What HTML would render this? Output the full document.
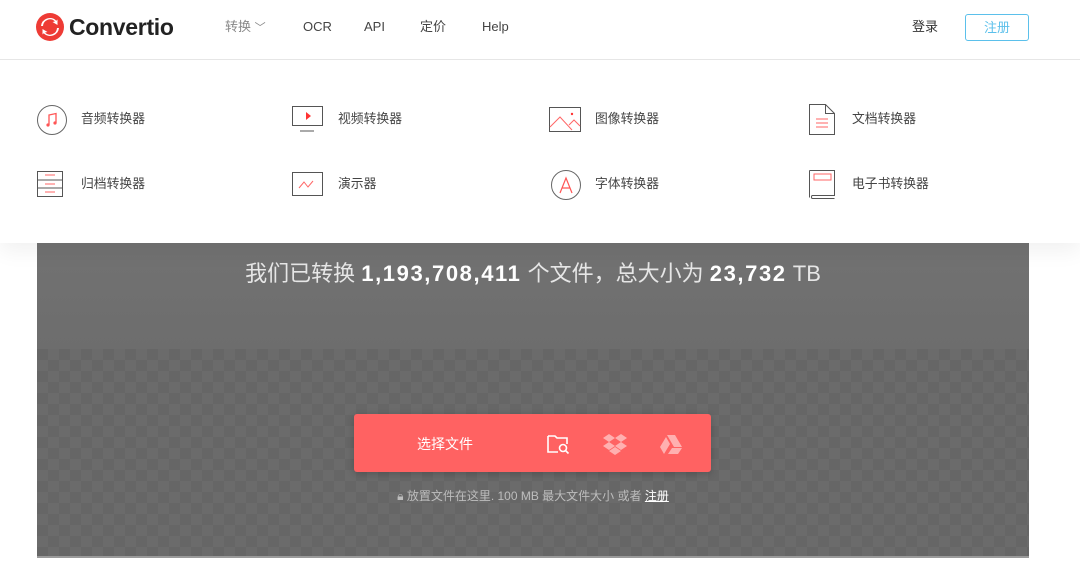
<!DOCTYPE html>
<html><head><meta charset="utf-8"><style>
*{margin:0;padding:0;box-sizing:border-box}
body{width:1080px;height:574px;background:#fff;font-family:"Liberation Sans","Noto Sans CJK SC",sans-serif;position:relative;overflow:hidden;color:#333}
.hdr{position:absolute;left:0;top:0;width:1080px;height:60px;border-bottom:1px solid #e6e6e6;background:#fff;z-index:3}
.nav{position:absolute;top:17px;height:20px;line-height:20px;font-size:13px;color:#444}
.menu{position:absolute;left:0;top:60px;width:1080px;height:183px;background:#fff;z-index:2;box-shadow:0 8px 20px rgba(0,0,0,.06)}
.it{position:absolute;font-size:12.8px;line-height:16px;color:#444}
.ic{position:absolute}
.panel{position:absolute;left:37px;top:243px;width:992px;height:315px;background:#666;border-bottom:2px solid #9a9a9a}
.top{position:absolute;left:0;top:0;width:992px;height:106px;background:linear-gradient(#727272,#6d6d6d)}
.chk{position:absolute;left:0;top:106px;width:992px;height:207px;background-color:#666;background-image:linear-gradient(45deg,#6b6b6b 25%,transparent 25%,transparent 75%,#6b6b6b 75%),linear-gradient(45deg,#6b6b6b 25%,transparent 25%,transparent 75%,#6b6b6b 75%);background-size:22px 22px;background-position:0 0,11px 11px}
.stat{position:absolute;left:0;top:16px;width:992px;line-height:30px;text-align:center;color:#e6e6e6;font-size:22px}
.stat b{color:#fff;font-weight:bold;letter-spacing:1.6px}
.btn{position:absolute;left:317px;top:171px;width:357px;height:58px;background:#ff6262;border-radius:3px;box-shadow:0 2px 8px rgba(0,0,0,.2)}
.note{position:absolute;left:0;top:244px;width:992px;text-align:center;color:#bdbdbd;font-size:12px}
</style></head><body>
<div class="hdr">
<svg style="position:absolute;left:36px;top:13px" width="28" height="28" viewBox="0 0 28 28"><circle cx="14" cy="14" r="14" fill="#ee3b35"/><path d="M7 13a7 7 0 0 1 12-4.5l-2.5 0.5 5 3 0-5.5-1.2 1.2A9 9 0 0 0 5 13z M21 15a7 7 0 0 1-12 4.5l2.5-.5-5-3 0 5.5 1.2-1.2A9 9 0 0 0 23 15z" fill="#fff"/></svg>
<div style="position:absolute;left:69px;top:12px;line-height:30px;font-size:23px;font-weight:bold;color:#222;letter-spacing:-0.3px">Convertio</div>
<div class="nav" style="left:225px;color:#888">转换 <span style="font-size:11px">﹀</span></div>
<div class="nav" style="left:303px">OCR</div>
<div class="nav" style="left:364px">API</div>
<div class="nav" style="left:420px">定价</div>
<div class="nav" style="left:482px">Help</div>
<div class="nav" style="left:912px;color:#333">登录</div>
<div style="position:absolute;left:965px;top:14px;width:64px;height:27px;border:1px solid #5bc0eb;border-radius:3px;color:#5bc0eb;font-size:13px;text-align:center;line-height:25px">注册</div>
</div>
<div class="menu">
<svg class="ic" style="left:36px;top:44px" width="32" height="32"><circle cx="16" cy="16" r="14.5" fill="none" stroke="#666"/><path d="M13 21V11l7-1.5V19" fill="none" stroke="#f55" stroke-width="1.3"/><circle cx="12" cy="21" r="1.6" fill="#f55"/><circle cx="19" cy="19" r="1.6" fill="#f55"/></svg>
<div class="it" style="left:81px;top:51px">音频转换器</div>
<svg class="ic" style="left:292px;top:46px" width="34" height="26"><rect x=".5" y=".5" width="30" height="19" fill="none" stroke="#555"/><path d="M14 6l5 4-5 4z" fill="#f33"/><path d="M8 25h14" stroke="#555"/></svg>
<div class="it" style="left:338px;top:51px">视频转换器</div>
<svg class="ic" style="left:549px;top:47px" width="34" height="26"><rect x=".5" y=".5" width="31" height="24" fill="none" stroke="#555"/><path d="M1 20l10-10 12 13M20 18l5-5 6 6" fill="none" stroke="#f66"/><circle cx="23" cy="7" r="1.2" fill="#f33"/></svg>
<div class="it" style="left:595px;top:51px">图像转换器</div>
<svg class="ic" style="left:809px;top:44px" width="28" height="32"><path d="M.5 .5h16l9 9v21H.5z M16.5 .5v9h9" fill="none" stroke="#555"/><path d="M7 15h12M7 19h12M7 23h12" stroke="#f66"/></svg>
<div class="it" style="left:852px;top:51px">文档转换器</div>
<svg class="ic" style="left:37px;top:111px" width="28" height="28"><path d="M.5 .5h25v25H.5zM.5 9h25M.5 17h25" fill="none" stroke="#555"/><path d="M8 4h10M8 13h10M8 21h10" stroke="#f66"/></svg>
<div class="it" style="left:81px;top:116px">归档转换器</div>
<svg class="ic" style="left:292px;top:112px" width="34" height="26"><rect x=".5" y=".5" width="30" height="23" fill="none" stroke="#555"/><path d="M7 16l5-6 4 5 5-6" fill="none" stroke="#f66"/></svg>
<div class="it" style="left:338px;top:116px">演示器</div>
<svg class="ic" style="left:550px;top:109px" width="32" height="32"><circle cx="16" cy="16" r="14.5" fill="none" stroke="#666"/><path d="M10 24l6-15 6 15M12 19h8" fill="none" stroke="#f55" stroke-width="1.2"/></svg>
<div class="it" style="left:595px;top:116px">字体转换器</div>
<svg class="ic" style="left:809px;top:110px" width="28" height="30"><path d="M.5 .5h25v25H3a2.5 2.5 0 0 0 0 3h22.5M.5 .5v27" fill="none" stroke="#555"/><rect x="5" y="4" width="17" height="6" fill="none" stroke="#f66"/></svg>
<div class="it" style="left:852px;top:116px">电子书转换器</div>
</div>
<div class="panel">
<div class="top"><div class="stat">我们已转换 <b>1,193,708,411</b> 个文件，总大小为 <b>23,732</b> TB</div></div>
<div class="chk"></div>
<div class="btn">
<div style="position:absolute;left:63px;top:20px;color:#fff;font-size:14px">选择文件</div>
<svg style="position:absolute;left:193px;top:19px" width="24" height="22"><path d="M1 3h7l2 2h10v6M1 3v16h10" fill="none" stroke="#fff" stroke-width="1.6"/><circle cx="16" cy="15" r="3.5" fill="none" stroke="#fff" stroke-width="1.6"/><path d="M18.5 17.5l3 3" stroke="#fff" stroke-width="1.6"/></svg>
<svg style="position:absolute;left:249px;top:19px" width="24" height="22" fill="#ffb0b0"><path d="M6 1l6 4-6 4-6-4zM18 1l6 4-6 4-6-4zM6 9l6 4-6 4-6-4zM18 9l6 4-6 4-6-4zM12 14l6 4-6 4-6-4z"/></svg>
<svg style="position:absolute;left:306px;top:20px" width="22" height="20" fill="#ffb0b0"><path d="M7 1h8l7 12h-8zM6 3l4 7-6 10-4-7zM8 20l4-6h10l-4 6z"/></svg>
</div>
<div class="note">🔒︎ 放置文件在这里. 100 MB 最大文件大小 或者 <span style="color:#fff;text-decoration:underline">注册</span></div>
</div>
</body></html>
